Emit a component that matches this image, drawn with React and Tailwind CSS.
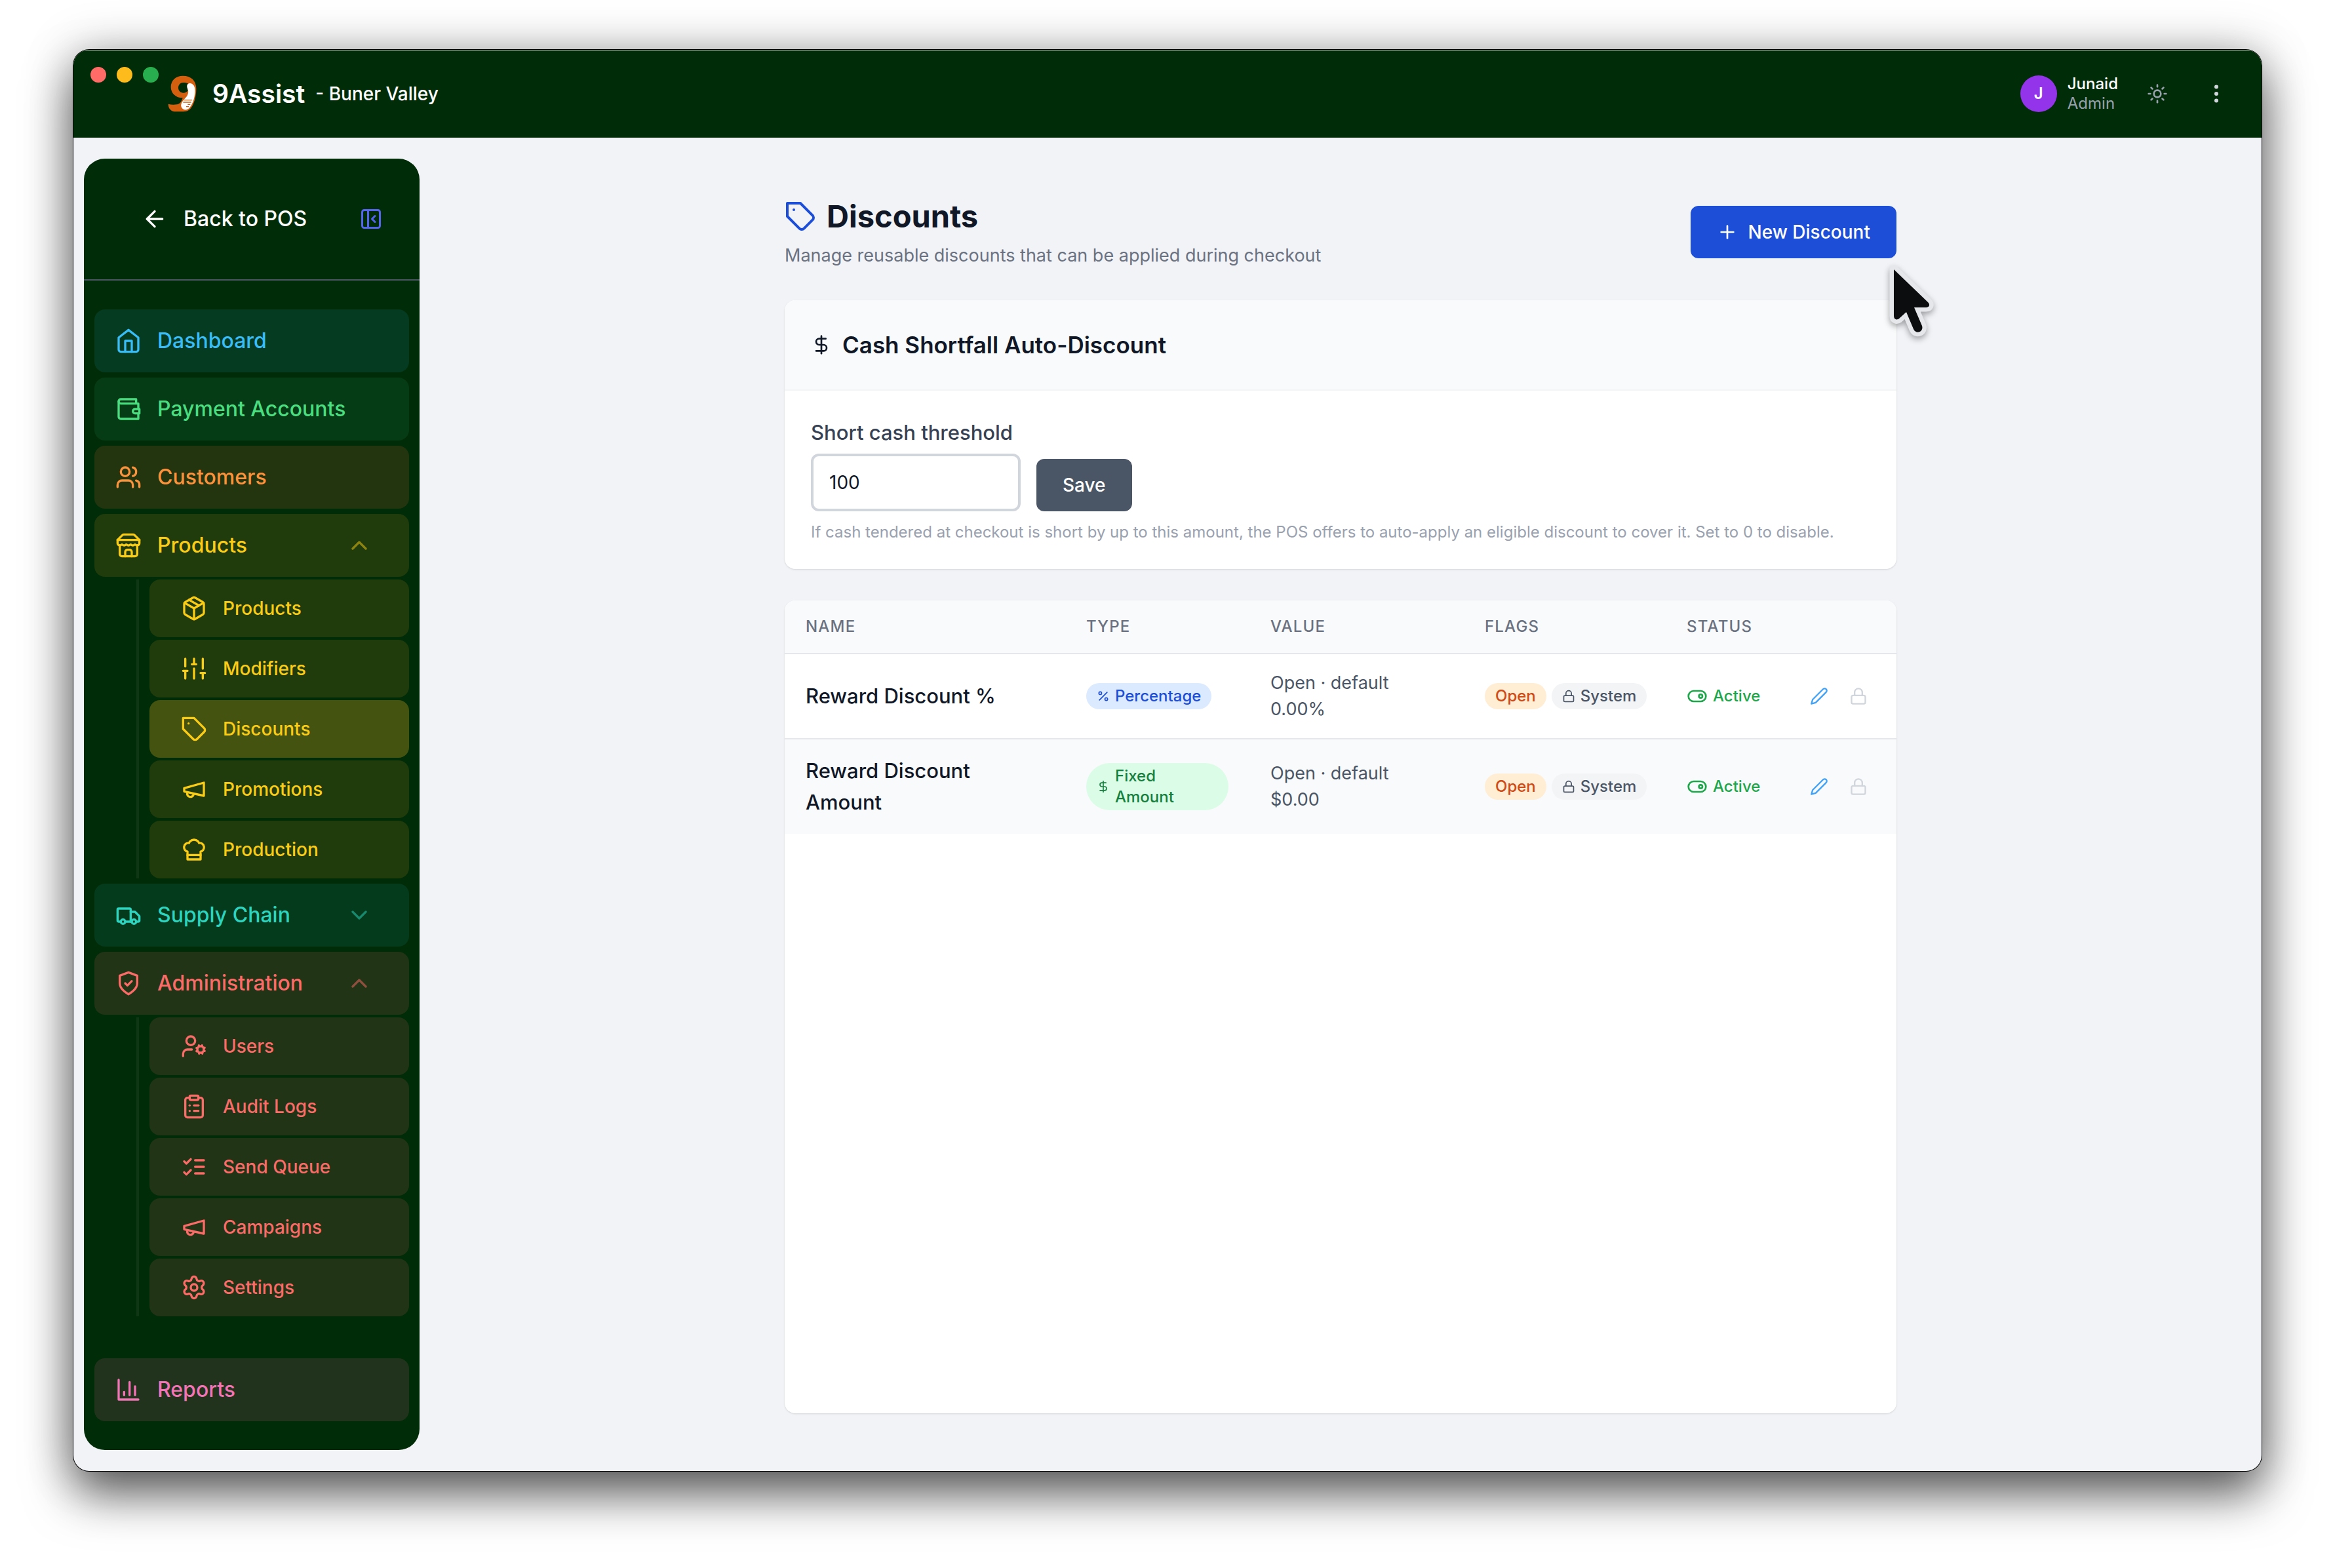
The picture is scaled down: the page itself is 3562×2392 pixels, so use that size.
import React, { useState } from "react";
import {
  ArrowLeft,
  ChevronDown,
  ChevronUp,
  ClipboardList,
  DollarSign,
  Lock,
  Package,
  Percent,
  Plus,
  Settings,
  Sun,
  Users,
} from "lucide-react";

// Base for the outline icons that are drawn here
const Svg = ({ className, children }) => (
  <svg
    className={className}
    viewBox="0 0 24 24"
    fill="none"
    stroke="currentColor"
    strokeWidth="2"
    strokeLinecap="round"
    strokeLinejoin="round"
    aria-hidden="true"
  >
    {children}
  </svg>
);

const HomeIcon = (props) => (
  <Svg {...props}>
    <path d="m3 9 9-7 9 7v11a2 2 0 0 1-2 2H5a2 2 0 0 1-2-2z" />
    <path d="M9 22V12h6v10" />
  </Svg>
);

const WalletIcon = (props) => (
  <Svg {...props}>
    <path d="M21 12V7H5a2 2 0 0 1 0-4h14v4" />
    <path d="M3 5v14a2 2 0 0 0 2 2h16v-5" />
    <path d="M18 12a2 2 0 0 0 0 4h4v-4Z" />
  </Svg>
);

const StoreIcon = (props) => (
  <Svg {...props}>
    <path d="m2 7 4.41-4.41A2 2 0 0 1 7.83 2h8.34a2 2 0 0 1 1.42.59L22 7" />
    <path d="M4 12v8a2 2 0 0 0 2 2h12a2 2 0 0 0 2-2v-8" />
    <path d="M15 22v-4a2 2 0 0 0-2-2h-2a2 2 0 0 0-2 2v4" />
    <path d="M2 7h20" />
    <path d="M22 7v3a2 2 0 0 1-2 2a2.7 2.7 0 0 1-1.59-.63.7.7 0 0 0-.82 0A2.7 2.7 0 0 1 16 12a2.7 2.7 0 0 1-1.59-.63.7.7 0 0 0-.82 0A2.7 2.7 0 0 1 12 12a2.7 2.7 0 0 1-1.59-.63.7.7 0 0 0-.82 0A2.7 2.7 0 0 1 8 12a2.7 2.7 0 0 1-1.59-.63.7.7 0 0 0-.82 0A2.7 2.7 0 0 1 4 12a2 2 0 0 1-2-2V7" />
  </Svg>
);

const SlidersIcon = (props) => (
  <Svg {...props}>
    <path d="M4 21v-7M4 10V3M12 21v-9M12 8V3M20 21v-5M20 12V3M2 14h4M10 8h4M18 16h4" />
  </Svg>
);

const TagIcon = (props) => (
  <Svg {...props}>
    <path d="M12 2H2v10l9.29 9.29c.94.94 2.48.94 3.42 0l6.58-6.58c.94-.94.94-2.48 0-3.42L12 2Z" />
    <path d="M7 7h.01" />
  </Svg>
);

const MegaphoneIcon = (props) => (
  <Svg {...props}>
    <path d="m3 11 18-5v12L3 14v-3z" />
    <path d="M11.6 16.8a3 3 0 1 1-5.8-1.6" />
  </Svg>
);

const ChefHatIcon = (props) => (
  <Svg {...props}>
    <path d="M6 13.87A4 4 0 0 1 7.41 6a5.11 5.11 0 0 1 1.05-1.54 5 5 0 0 1 7.08 0A5.11 5.11 0 0 1 16.59 6 4 4 0 0 1 18 13.87V21H6Z" />
    <path d="M6 17h12" />
  </Svg>
);

const TruckIcon = (props) => (
  <Svg {...props}>
    <path d="M5 18H3c-.6 0-1-.4-1-1V7c0-.6.4-1 1-1h10c.6 0 1 .4 1 1v11" />
    <path d="M14 9h4l4 4v4c0 .6-.4 1-1 1h-2" />
    <circle cx="7" cy="18" r="2" />
    <path d="M15 18H9" />
    <circle cx="17" cy="18" r="2" />
  </Svg>
);

const ShieldIcon = (props) => (
  <Svg {...props}>
    <path d="M12 22s8-4 8-10V5l-8-3-8 3v7c0 6 8 10 8 10" />
    <path d="m9 12 2 2 4-4" />
  </Svg>
);

const UserCogIcon = (props) => (
  <Svg {...props}>
    <circle cx="18" cy="15" r="3" />
    <circle cx="9" cy="7" r="4" />
    <path d="M10 15H6a4 4 0 0 0-4 4v2" />
    <path d="m21.7 16.4-.9-.3M15.2 13.9l-.9-.3M16.6 18.7l.3-.9M19.1 12.2l.3-.9M19.6 18.7l-.4-1M16.8 12.3l-.4-1M14.3 16.6l1-.4M20.7 13.8l1-.4" />
  </Svg>
);

const ListChecksIcon = (props) => (
  <Svg {...props}>
    <path d="m3 17 2 2 4-4M3 7l2 2 4-4M13 6h8M13 12h8M13 18h8" />
  </Svg>
);

const ChartIcon = (props) => (
  <Svg {...props}>
    <path d="M3 3v18h18M18 17V9M13 17V5M8 17v-3" />
  </Svg>
);

const PanelCloseIcon = (props) => (
  <Svg {...props}>
    <rect width="18" height="18" x="3" y="3" rx="2" />
    <path d="M9 3v18M16 15l-3-3 3-3" />
  </Svg>
);

const PencilIcon = (props) => (
  <Svg {...props}>
    <path d="M17 3a2.85 2.83 0 1 1 4 4L7.5 20.5 2 22l1.5-5.5Z" />
  </Svg>
);

const ToggleIcon = (props) => (
  <Svg {...props}>
    <rect width="20" height="12" x="2" y="6" rx="6" />
    <circle cx="16" cy="12" r="2" />
  </Svg>
);

const DotsIcon = (props) => (
  <Svg {...props}>
    <circle cx="12" cy="12" r="1" />
    <circle cx="12" cy="5" r="1" />
    <circle cx="12" cy="19" r="1" />
  </Svg>
);

// Brand mark: orange nine wrapped round a paper receipt
const Logo = () => (
  <svg className="h-14 w-11 shrink-0" viewBox="36 31 132 168" aria-hidden="true">
    <path
      fill="#d4600f"
      fillRule="evenodd"
      d="M105 33C142 33 166 54 166 92C166 130 155 165 141 182C132 193 120 197 100 197H74C52 197 38 184 38 162C52 166 64 166 78 164C91 162 98 154 104 134C72 134 50 112 50 84C50 54 72 33 105 33ZM107 64C93 64 84 74 84 88C84 101 94 111 107 111C116 111 124 107 128 100C124 88 124 76 130 70C124 66 116 64 107 64Z"
    />
    <path
      fill="#fff"
      d="M133 68C146 64 158 76 160 92C163 122 152 160 136 179C126 192 104 192 98 176C93 160 106 146 117 134C130 120 132 106 127 93C121 79 124 71 133 68Z"
    />
    <path stroke="#d4600f" strokeWidth="4" d="M110 144h37M106 154h37M127 164h12M120 174h12" />
  </svg>
);

const Cursor = () => (
  <svg
    className="pointer-events-none absolute -right-[66px] top-[78px] z-10 h-[132px] w-[84px] drop-shadow-[0_4px_5px_rgba(0,0,0,0.35)]"
    viewBox="0 0 84 132"
    aria-hidden="true"
  >
    <path
      d="M14 19L66 69C70 73 68 77 63 77H45L57 105C60 114 48 119 44 110L33 84L22 94C18 97 14 95 14 90Z"
      fill="#0b0d0e"
      stroke="#e5e7ea"
      strokeWidth="13"
      strokeLinejoin="round"
      paintOrder="stroke"
    />
  </svg>
);

const yellow = "bg-[#203b0c] text-[#facc15]";
const red = "bg-[#223416] text-[#fb6b68]";

const menu = [
  { label: "Dashboard", icon: HomeIcon, style: "bg-[#043b21] text-[#38bdf8]" },
  { label: "Payment Accounts", icon: WalletIcon, style: "bg-[#053c15] text-[#4ade80]" },
  { label: "Customers", icon: Users, style: "bg-[#22350e] text-[#fb923c]" },
  {
    label: "Products",
    icon: StoreIcon,
    style: yellow,
    open: true,
    children: [
      { label: "Products", icon: Package },
      { label: "Modifiers", icon: SlidersIcon },
      { label: "Discounts", icon: TagIcon, active: true },
      { label: "Promotions", icon: MegaphoneIcon },
      { label: "Production", icon: ChefHatIcon },
    ],
  },
  { label: "Supply Chain", icon: TruckIcon, style: "bg-[#043b1c] text-[#2dd4bf]", children: [] },
  {
    label: "Administration",
    icon: ShieldIcon,
    style: red,
    open: true,
    children: [
      { label: "Users", icon: UserCogIcon },
      { label: "Audit Logs", icon: ClipboardList },
      { label: "Send Queue", icon: ListChecksIcon },
      { label: "Campaigns", icon: MegaphoneIcon },
      { label: "Settings", icon: Settings },
    ],
  },
];

const discounts = [
  { name: "Reward Discount %", type: "percentage", value: "0.00%" },
  { name: "Reward Discount Amount", type: "fixed", value: "$0.00" },
];

const itemClass = "flex h-24 w-full items-center gap-6 rounded-2xl px-8 text-left text-[32px] font-medium";

const NavGroup = ({ item }) => {
  const [open, setOpen] = useState(Boolean(item.open));
  const Icon = item.icon;
  const Chevron = open ? ChevronUp : ChevronDown;
  return (
    <li>
      <button type="button" onClick={() => setOpen(!open)} className={`${itemClass} ${item.style}`}>
        <Icon className="size-10 shrink-0" />
        <span className="flex-1">{item.label}</span>
        <Chevron className="mr-6 size-10 opacity-50" />
      </button>
      {open && item.children.length > 0 && (
        <ul className="ml-16 mt-1 flex flex-col gap-1 border-l-4 border-[#0f3716] pl-4">
          {item.children.map((child) => {
            const ChildIcon = child.icon;
            return (
              <li key={child.label}>
                <a
                  href="#"
                  className={`flex h-22 items-center gap-6 rounded-2xl px-12 text-[28px] font-medium ${
                    child.active ? "bg-[#44530f] text-[#facc15]" : item.style
                  }`}
                >
                  <ChildIcon className="size-10 shrink-0" />
                  {child.label}
                </a>
              </li>
            );
          })}
        </ul>
      )}
    </li>
  );
};

const Sidebar = () => (
  <aside className="flex w-[512px] shrink-0 flex-col rounded-[32px] bg-[#002c08]">
    <div className="flex h-[186px] items-center border-b-2 border-[#4b5563] pl-[88px] pr-14">
      <a href="#" className="flex items-center gap-6 text-[32px] font-medium text-white">
        <ArrowLeft className="size-10" />
        Back to POS
      </a>
      <button type="button" aria-label="Collapse sidebar" className="ml-auto text-[#5563f2]">
        <PanelCloseIcon className="size-9" />
      </button>
    </div>
    <nav className="flex flex-1 flex-col px-4 py-11">
      <ul className="flex flex-col gap-2">
        {menu.map((item) =>
          item.children ? (
            <NavGroup key={item.label} item={item} />
          ) : (
            <li key={item.label}>
              <a href="#" className={`${itemClass} ${item.style}`}>
                <item.icon className="size-10 shrink-0" />
                {item.label}
              </a>
            </li>
          )
        )}
      </ul>
      <a href="#" className={`${itemClass} mt-auto bg-[#21331c] text-[#f472b6]`}>
        <ChartIcon className="size-10 shrink-0" />
        Reports
      </a>
    </nav>
  </aside>
);

const Header = () => (
  <header className="relative flex h-[134px] shrink-0 items-center bg-[#002c08] pl-36 pr-[51px] text-white shadow-[inset_0_2px_0_#56745a]">
    {/* Window controls */}
    <div className="absolute left-[26px] top-[26px] flex gap-4">
      <span className="size-6 rounded-full bg-[#ff6b67]" />
      <span className="size-6 rounded-full bg-[#fdbc1c]" />
      <span className="size-6 rounded-full bg-[#29ae4f]" />
    </div>
    <Logo />
    <span className="ml-6 text-[39px] font-semibold">9Assist</span>
    <span className="ml-4 text-[28px] font-medium">- Buner Valley</span>
    <div className="ml-auto flex items-center gap-4">
      <span className="flex size-14 items-center justify-center rounded-full bg-[#9333ea] text-2xl font-semibold">J</span>
      <div className="text-2xl leading-[30px]">
        <div className="font-medium">Junaid</div>
        <div className="text-gray-400">Admin</div>
      </div>
    </div>
    <button type="button" aria-label="Toggle theme" className="ml-11 text-gray-400">
      <Sun className="size-8" />
    </button>
    <button type="button" aria-label="More options" className="ml-14 text-gray-300">
      <DotsIcon className="size-9" />
    </button>
  </header>
);

const CashShortfall = () => {
  const [threshold, setThreshold] = useState("100");
  return (
    <section className="overflow-hidden rounded-2xl bg-white shadow-sm">
      <div className="flex items-center gap-4 border-b-2 border-gray-100 bg-gray-50 p-10">
        <DollarSign className="size-8" />
        <h2 className="text-[35px] leading-14 font-semibold">Cash Shortfall Auto-Discount</h2>
      </div>
      <form className="p-10" onSubmit={(e) => e.preventDefault()}>
        <div className="flex items-end gap-6">
          <div className="flex flex-col gap-2">
            <label htmlFor="threshold" className="text-[31px] leading-12 font-medium text-gray-700">
              Short cash threshold
            </label>
            <input
              id="threshold"
              type="text"
              value={threshold}
              onChange={(e) => setThreshold(e.target.value)}
              className="h-22 w-80 rounded-xl border-4 border-gray-300 bg-white px-6 text-[28px] text-gray-900"
            />
          </div>
          <button type="submit" className="h-20 rounded-xl bg-gray-600 px-10 text-[28px] font-medium text-white">
            Save
          </button>
        </div>
        <p className="mt-4 text-2xl text-gray-400">
          If cash tendered at checkout is short by up to this amount, the POS offers to auto-apply an eligible discount
          to cover it. Set to 0 to disable.
        </p>
      </form>
    </section>
  );
};

const TypeBadge = ({ type }) =>
  type === "percentage" ? (
    <span className="inline-flex items-center gap-2 rounded-full bg-blue-100 px-4 py-1 text-2xl font-medium text-[#1d4ed8]">
      <Percent className="size-5 shrink-0" />
      Percentage
    </span>
  ) : (
    <span className="flex items-center gap-2 rounded-full bg-green-100 px-4 py-1 text-2xl font-medium text-[#15803d]">
      <DollarSign className="size-5 shrink-0" />
      <span className="w-min">Fixed Amount</span>
    </span>
  );

const DiscountTable = () => (
  <section className="flex-1 overflow-hidden rounded-2xl bg-white shadow-sm">
    <table className="w-full table-fixed text-left">
      <colgroup>
        <col className="w-[428px]" />
        <col className="w-[281px]" />
        <col className="w-[327px]" />
        <col className="w-[308px]" />
        <col className="w-44" />
        <col className="w-44" />
      </colgroup>
      <thead className="border-b-2 border-gray-200 bg-gray-50 text-2xl tracking-wider text-gray-500 uppercase">
        <tr>
          <th className="px-8 py-6 font-medium">Name</th>
          <th className="px-8 py-6 font-medium">Type</th>
          <th className="px-8 py-6 font-medium">Value</th>
          <th className="px-8 py-6 font-medium">Flags</th>
          <th className="px-8 py-6 font-medium">Status</th>
          <th className="px-8 py-6" aria-label="Actions" />
        </tr>
      </thead>
      <tbody className="divide-y-2 divide-gray-200">
        {discounts.map((d) => (
          <tr key={d.name} className="even:bg-gray-50">
            <td className="px-8 py-6 text-[31px] leading-12 font-medium">{d.name}</td>
            <td className="px-8 py-6">
              <TypeBadge type={d.type} />
            </td>
            <td className="px-8 py-6 text-[27px] leading-10 text-gray-600">
              <span className="block">Open · default</span>
              <span className="block">{d.value}</span>
            </td>
            <td className="py-6 pl-8">
              <div className="flex items-center gap-2 text-2xl">
                <span className="rounded-full bg-orange-100 px-4 py-1 font-medium text-[#cf4a14]">Open</span>
                <span className="flex items-center gap-2 rounded-full bg-gray-100 px-4 py-1 font-medium text-gray-600">
                  <Lock className="size-5" />
                  System
                </span>
              </div>
            </td>
            <td className="py-6 pl-8">
              <button type="button" className="flex items-center gap-2 text-2xl font-medium text-[#1da64a]">
                <ToggleIcon className="size-8" />
                Active
              </button>
            </td>
            <td className="px-8">
              <div className="flex justify-end gap-2">
                <button type="button" aria-label={`Edit ${d.name}`} className="p-3 text-[#3fa2f7]">
                  <PencilIcon className="size-7" />
                </button>
                <span className="p-3 text-gray-300">
                  <Lock className="size-7" />
                </span>
              </div>
            </td>
          </tr>
        ))}
      </tbody>
    </table>
  </section>
);

const App = () => (
  <div className="flex min-h-screen flex-col bg-white px-28 pt-[76px] pb-[148px] font-['Inter',sans-serif] text-gray-900">
    <div className="flex flex-1 flex-col overflow-hidden rounded-3xl bg-[#f2f3f7] shadow-[0_0_0_1px_#000,0_36px_72px_rgba(0,0,0,0.6),0_0_72px_rgba(0,0,0,0.25)]">
      <Header />
      <div className="flex flex-1">
        <div className="flex py-8 pl-4">
          <Sidebar />
        </div>
        <main className="flex flex-1 flex-col">
          <div className="mx-auto flex w-full max-w-[1792px] flex-1 flex-col gap-12 px-12 py-22">
            <div className="relative flex items-center justify-between">
              <div>
                <h1 className="flex items-center gap-4 text-[47px] leading-16 font-bold">
                  <TagIcon className="size-12 text-[#1d4ed8]" />
                  Discounts
                </h1>
                <p className="mt-2 text-[27px] leading-10 text-gray-500">
                  Manage reusable discounts that can be applied during checkout
                </p>
              </div>
              <div className="relative">
                <button
                  type="button"
                  className="flex h-20 items-center gap-4 rounded-xl bg-[#1d4ed8] px-10 text-[28px] font-medium text-white"
                >
                  <Plus className="size-8" />
                  New Discount
                </button>
                <Cursor />
              </div>
            </div>
            <CashShortfall />
            <DiscountTable />
          </div>
        </main>
      </div>
    </div>
  </div>
);

export default App;
